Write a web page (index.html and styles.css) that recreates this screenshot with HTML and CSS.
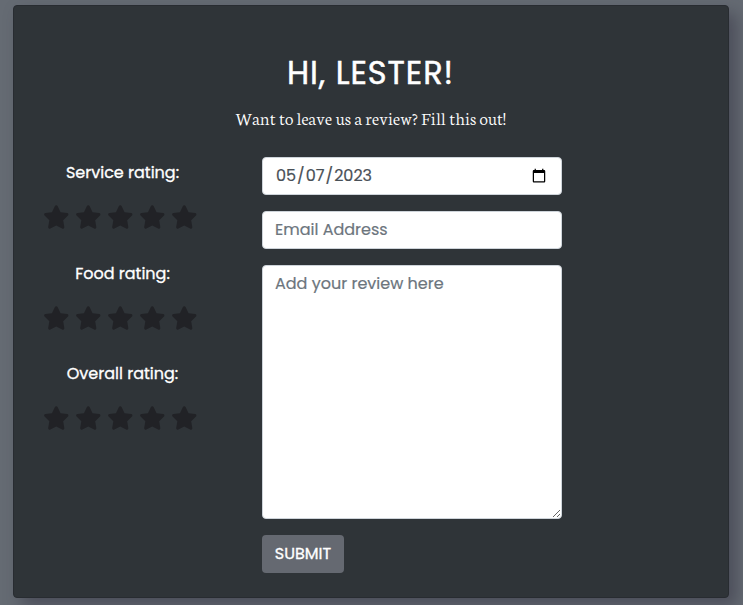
FILE: index.html
```html
<!DOCTYPE html>
<html lang="en">
<head>
<meta charset="utf-8">
<title>Leave a review</title>
<link rel="stylesheet" href="styles.css">
</head>
<body>
<svg class="defs" width="0" height="0" aria-hidden="true">
  <symbol id="star" viewBox="0 0 576 512"><path d="M316.9 18C311.6 7 300.4 0 288.1 0s-23.4 7-28.8 18L195 150.3 51.4 171.5c-12 1.8-22 10.2-25.7 21.7s-.7 24.2 7.9 32.7L137.8 329 113.2 474.7c-2 12 3 24.2 12.9 31.3s23 8 33.8 2.3l128.3-68.5 128.3 68.5c10.8 5.7 23.9 4.9 33.8-2.3s14.9-19.3 12.9-31.3L438.5 329 542.7 225.9c8.6-8.5 11.7-21.2 7.9-32.7s-13.7-19.9-25.7-21.7L381.2 150.3 316.9 18z"/></symbol>
</svg>
<main class="card">
  <h1 class="title">HI, LESTER!</h1>
  <p class="lead">Want to leave us a review? Fill this out!</p>
  <form class="review">
    <div class="ratings">
      <section class="rating">
        <h2 class="label">Service rating:</h2>
        <div class="stars"><svg><use href="#star"/></svg><svg><use href="#star"/></svg><svg><use href="#star"/></svg><svg><use href="#star"/></svg><svg><use href="#star"/></svg></div>
      </section>
      <section class="rating">
        <h2 class="label">Food rating:</h2>
        <div class="stars"><svg><use href="#star"/></svg><svg><use href="#star"/></svg><svg><use href="#star"/></svg><svg><use href="#star"/></svg><svg><use href="#star"/></svg></div>
      </section>
      <section class="rating">
        <h2 class="label">Overall rating:</h2>
        <div class="stars"><svg><use href="#star"/></svg><svg><use href="#star"/></svg><svg><use href="#star"/></svg><svg><use href="#star"/></svg><svg><use href="#star"/></svg></div>
      </section>
    </div>
    <div class="fields">
      <input class="field date" type="date" value="2023-05-07">
      <input class="field email" type="email" placeholder="Email Address">
      <textarea class="field message" placeholder="Add your review here"></textarea>
      <button class="submit" type="button">SUBMIT</button>
    </div>
  </form>
</main>
</body>
</html>
```
FILE: styles.css
```css
* { box-sizing: border-box; }
html, body { height: 100%; }
body {
  margin: 0;
  padding: 5px 14px 0 13px;
  overflow: hidden;
  background: #656b73;
  color: #fff;
  font: 16px/24px Poppins, Inter, sans-serif;
}
.defs { position: absolute; }
.card {
  height: 593px;
  padding: 48px 30px 0;
  border: 1px solid #282c31;
  border-radius: 4px;
  background: #2f3438;
  box-shadow: 8px 8px 16px rgba(52, 50, 65, .5);
}
.title {
  margin: 0;
  padding-right: 1px;
  font-size: 32px;
  font-weight: 400;
  line-height: 38px;
  letter-spacing: .95px;
  text-align: center;
  -webkit-text-stroke: .5px #fff;
}
.lead {
  margin: 14px 0 0;
  padding-right: 1px;
  font: 300 19px/23px Neuton, "Liberation Serif", serif;
  letter-spacing: -.1px;
  word-spacing: .6px;
  text-align: center;
}
.review {
  display: flex;
  margin-top: 28px;
}
.ratings { width: 157px; }
.rating { height: 100.5px; padding-top: 4px; }
.label {
  margin: 0;
  font-size: 16px;
  font-weight: 400;
  line-height: 24px;
  text-align: center;
  -webkit-text-stroke: .3px #fff;
}
.stars {
  display: flex;
  justify-content: center;
  gap: 5px;
  margin-top: 20px;
  padding-right: 5px;
}
.stars svg {
  width: 26.5px;
  height: 24px;
  margin-right: .5px;
  flex: none;
  fill: #212226;
}
.fields {
  display: flex;
  flex-direction: column;
  align-items: flex-start;
  gap: 16px;
  width: 300px;
  margin-left: 61px;
}
.field {
  display: block;
  width: 300px;
  height: 38px;
  margin: 0;
  padding: 6px 12px;
  border: 1px solid #ced4da;
  border-radius: 4px;
  background: #fff;
  color: #495057;
  font: inherit;
  -webkit-text-stroke: .2px currentColor;
}
.email { padding: 5px 12px 7px; }
.field::placeholder { color: #6c757d; opacity: 1; }
.message { height: 254px; resize: vertical; }
.submit {
  width: 82px;
  height: 38px;
  padding: 0;
  border: 0;
  border-radius: 4px;
  background: #656971;
  color: #fff;
  font: 400 16px/24px Poppins, Inter, sans-serif;
  -webkit-text-stroke: .3px #fff;
}
```
